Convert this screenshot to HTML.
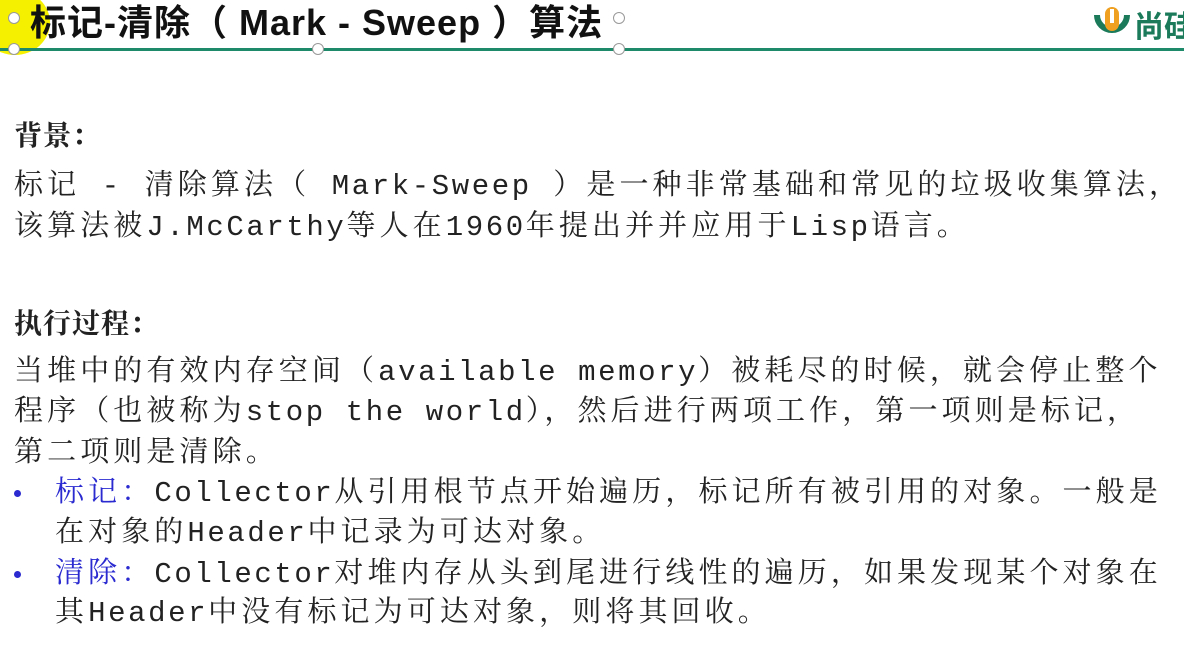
<!DOCTYPE html>
<html><head><meta charset="utf-8"><style>
body{margin:0;width:1184px;height:658px;background:#fff;overflow:hidden;position:relative;font-family:"Liberation Mono","Noto Serif CJK SC",monospace;color:#222}
.t{position:absolute;left:30px;top:-6px;font:bold 36px "Liberation Sans","Noto Sans CJK SC",sans-serif;letter-spacing:1px;color:#111;white-space:nowrap}
.bar{position:absolute;left:0;top:48px;width:1184px;height:3px;background:#1f8a6a}
.l{position:absolute;left:14px;font-size:29px;letter-spacing:4.1px;white-space:nowrap;line-height:34px}
.h{font-weight:bold;font-family:"Noto Serif CJK SC",serif;letter-spacing:1px;font-size:28px}
.b{color:#2a2ad0}
.m{letter-spacing:2.6px}
.dot{position:absolute;left:14px;width:7px;height:7px;border-radius:50%;background:#2a2ad0}
.hd{position:absolute;width:10px;height:10px;border:1.5px solid #999;border-radius:50%;background:#fff}
</style></head><body>
<div style="position:absolute;left:-20px;top:-10px;width:70px;height:65px;border-radius:50%;background:#f5f000"></div>
<div class="t">标记-清除（ Mark - Sweep ）算法</div>
<div class="bar"></div>
<div class="hd" style="left:8px;top:12px"></div>
<div class="hd" style="left:8px;top:43px"></div>
<div class="hd" style="left:312px;top:43px"></div>
<div class="hd" style="left:613px;top:12px"></div>
<div class="hd" style="left:613px;top:43px"></div>
<svg style="position:absolute;left:1093px;top:5px" width="40" height="36" viewBox="0 0 40 36"><path d="M4 10 A15 15 0 0 0 34 10" fill="none" stroke="#1a7a5a" stroke-width="6"/><rect x="12" y="2" width="14" height="24" rx="7" fill="#f0a020"/><rect x="17" y="4" width="4" height="14" fill="#fff"/></svg>
<div style="position:absolute;left:1134px;top:2px;font:bold 30px 'Noto Sans CJK SC',sans-serif;color:#1a7a5a;white-space:nowrap">尚硅</div>
<div class="l h" style="top:117px">背景：</div>
<div class="l" style="top:170px">标记 - 清除算法（ <span class="m">Mark-Sweep</span> ）是一种非常基础和常见的垃圾收集算法，</div>
<div class="l" style="top:211px">该算法被<span class="m">J.McCarthy</span>等人在<span class="m">1960</span>年提出并并应用于<span class="m">Lisp</span>语言。</div>
<div class="l h" style="top:305px">执行过程：</div>
<div class="l" style="top:356px">当堆中的有效内存空间（<span class="m">available memory</span>）被耗尽的时候，就会停止整个</div>
<div class="l" style="top:396px">程序（也被称为<span class="m">stop the world</span>），然后进行两项工作，第一项则是标记，</div>
<div class="l" style="top:437px">第二项则是清除。</div>
<div class="dot" style="top:490px"></div>
<div class="l" style="top:477px;left:55px"><span class="b">标记：</span><span class="m">Collector</span>从引用根节点开始遍历，标记所有被引用的对象。一般是</div>
<div class="l" style="top:517px;left:55px">在对象的<span class="m">Header</span>中记录为可达对象。</div>
<div class="dot" style="top:571px"></div>
<div class="l" style="top:558px;left:55px"><span class="b">清除：</span><span class="m">Collector</span>对堆内存从头到尾进行线性的遍历，如果发现某个对象在</div>
<div class="l" style="top:597px;left:55px">其<span class="m">Header</span>中没有标记为可达对象，则将其回收。</div>
</body></html>
